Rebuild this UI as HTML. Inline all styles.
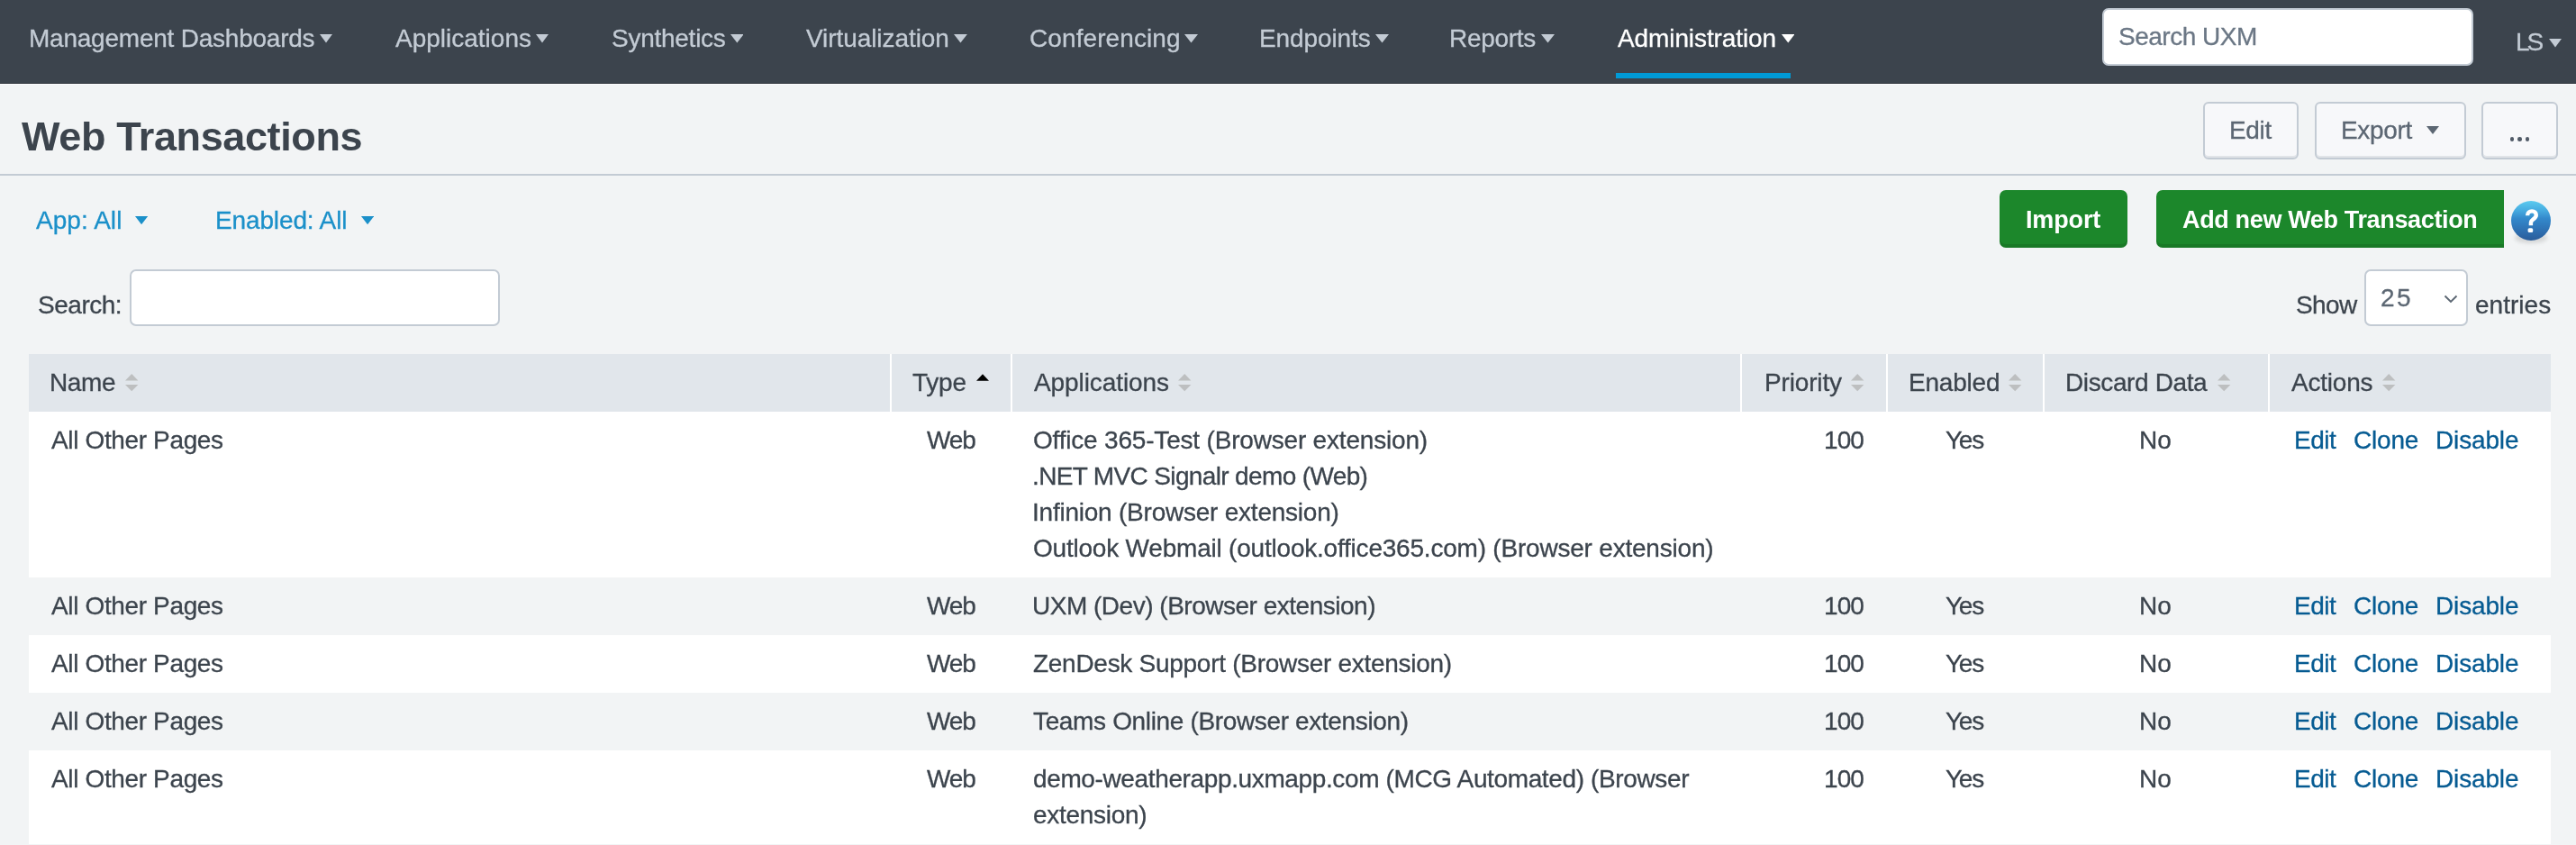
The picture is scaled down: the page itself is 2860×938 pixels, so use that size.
<!DOCTYPE html>
<html>
<head>
<meta charset="utf-8">
<style>
html,body{margin:0;padding:0;}
body{width:2860px;height:938px;overflow:hidden;background:#f2f4f5;font-family:"Liberation Sans",sans-serif;color:#3c444d;position:relative;}
.a{position:absolute;display:block;}
.x{position:absolute;white-space:nowrap;will-change:transform;-webkit-text-stroke:0.3px currentColor;}
#nav{position:absolute;left:0;top:0;width:2860px;height:92px;background:#3c444d;border-bottom:1px solid #30363d;}
#navw{position:absolute;left:0;top:93px;width:2860px;height:1px;background:#fbfbfc;}
#uline{position:absolute;left:1794px;top:81px;width:194px;height:6px;background:#009ad6;}
#gsearch{position:absolute;left:2334px;top:9px;width:408px;height:60px;background:#fff;border:2px solid #c3cbd4;border-radius:7px;}
#hr{position:absolute;left:0;top:193px;width:2860px;height:2px;background:#c3cbd4;}
.btn{position:absolute;top:113px;height:60px;background:#f7f8fa;border:2px solid #c3cbd4;border-radius:6px;box-shadow:inset 0 -2px 0 #e1e4e8;}
.dot{position:absolute;top:152px;width:4.6px;height:4.6px;border-radius:50%;background:#505a66;}
.gbtn{position:absolute;top:211px;height:64px;background:#1c872b;border-radius:7px;box-shadow:inset 0 -4px 0 rgba(0,0,0,0.10);}
#help{position:absolute;left:2788px;top:223px;width:44px;height:44px;border-radius:50%;background:linear-gradient(#5ccbef 0%,#48aee2 22%,#3388cb 45%,#2f74b6 70%,#2a5c9a 100%);}
#helpsh{position:absolute;left:2792px;top:258px;width:36px;height:12px;border-radius:50%;background:rgba(0,0,0,0.12);filter:blur(2px);}
#srch{position:absolute;left:144px;top:299px;width:407px;height:59px;background:#fff;border:2px solid #c3cbd4;border-radius:7px;}
#sel{position:absolute;left:2625px;top:299px;width:111px;height:59px;background:#fff;border:2px solid #c3cbd4;border-radius:7px;}
#thead{position:absolute;left:32px;top:393px;width:2800px;height:64px;background:#e1e6eb;}
.sep{position:absolute;top:393px;width:2px;height:64px;background:#fff;}
.row{position:absolute;left:32px;width:2800px;}

</style>
</head>
<body>
<div id="nav"></div><div id="navw"></div>
<svg class="a" style="left:355.0px;top:38.0px" width="14.0" height="9.5" viewBox="0 0 14.00 9.50"><path d="M0 0 L14.00 0 L7.00 9.50 Z" fill="#c3cbd4"/></svg>
<svg class="a" style="left:595.0px;top:38.0px" width="14.0" height="9.5" viewBox="0 0 14.00 9.50"><path d="M0 0 L14.00 0 L7.00 9.50 Z" fill="#c3cbd4"/></svg>
<svg class="a" style="left:810.6px;top:38.0px" width="14.7" height="9.5" viewBox="0 0 14.70 9.50"><path d="M0 0 L14.70 0 L7.35 9.50 Z" fill="#c3cbd4"/></svg>
<svg class="a" style="left:1059.3px;top:38.0px" width="14.9" height="9.5" viewBox="0 0 14.90 9.50"><path d="M0 0 L14.90 0 L7.45 9.50 Z" fill="#c3cbd4"/></svg>
<svg class="a" style="left:1315.0px;top:38.0px" width="15.0" height="9.5" viewBox="0 0 15.00 9.50"><path d="M0 0 L15.00 0 L7.50 9.50 Z" fill="#c3cbd4"/></svg>
<svg class="a" style="left:1527.0px;top:38.0px" width="15.0" height="9.5" viewBox="0 0 15.00 9.50"><path d="M0 0 L15.00 0 L7.50 9.50 Z" fill="#c3cbd4"/></svg>
<svg class="a" style="left:1711.0px;top:38.0px" width="15.0" height="9.5" viewBox="0 0 15.00 9.50"><path d="M0 0 L15.00 0 L7.50 9.50 Z" fill="#c3cbd4"/></svg>
<svg class="a" style="left:1977.5px;top:38.0px" width="14.5" height="9.5" viewBox="0 0 14.50 9.50"><path d="M0 0 L14.50 0 L7.25 9.50 Z" fill="#ffffff"/></svg>
<div id="uline"></div><div id="gsearch"></div>
<svg class="a" style="left:2830.0px;top:43.0px" width="14.0" height="9.5" viewBox="0 0 14.00 9.50"><path d="M0 0 L14.00 0 L7.00 9.50 Z" fill="#c3cbd4"/></svg>
<div id="hr"></div>
<div class="btn" style="left:2446px;width:102px"></div>
<div class="btn" style="left:2570px;width:164px"></div>
<svg class="a" style="left:2694.0px;top:140.0px" width="14.0" height="9.0" viewBox="0 0 14.00 9.00"><path d="M0 0 L14.00 0 L7.00 9.00 Z" fill="#5c6773"/></svg>
<div class="btn" style="left:2755px;width:81px"></div>
<div class="dot" style="left:2786.8px"></div>
<div class="dot" style="left:2795.2px"></div>
<div class="dot" style="left:2803.6px"></div>
<svg class="a" style="left:150.4px;top:240.0px" width="14.2" height="9.2" viewBox="0 0 14.20 9.20"><path d="M0 0 L14.20 0 L7.10 9.20 Z" fill="#1b90c9"/></svg>
<svg class="a" style="left:400.7px;top:240.0px" width="14.2" height="9.2" viewBox="0 0 14.20 9.20"><path d="M0 0 L14.20 0 L7.10 9.20 Z" fill="#1b90c9"/></svg>
<div class="gbtn" style="left:2220px;width:142px"></div>
<div class="gbtn" style="left:2394px;width:386px;border-radius:7px 0 0 7px"></div>
<div id="helpsh"></div><div id="help"></div>
<svg class="a" style="left:2788px;top:223px" width="44" height="44" viewBox="0 0 44 44"><path d="M18.1 16.2 C18.1 12.9 20.3 11.4 23.1 11.4 C26 11.4 27.8 13.3 27.8 15.7 C27.8 18.3 25.9 19.4 24.1 20.7 C22.6 21.8 21.9 22.8 21.9 24.8 L21.9 27.2" fill="none" stroke="#fff" stroke-width="4.4"/><rect x="18.6" y="30.2" width="5.6" height="4.8" rx="1.6" fill="#fff"/></svg>
<div id="srch"></div>
<div id="sel"></div>
<svg class="a" style="left:2713px;top:327px" width="16" height="10" viewBox="0 0 16 10"><path d="M1.5 1.5 L8 8 L14.5 1.5" fill="none" stroke="#5c6773" stroke-width="1.9"/></svg>
<div id="thead"></div>
<div class="sep" style="left:988px"></div>
<div class="sep" style="left:1122px"></div>
<div class="sep" style="left:1932px"></div>
<div class="sep" style="left:2094px"></div>
<div class="sep" style="left:2268px"></div>
<div class="sep" style="left:2518px"></div>
<svg class="a" style="left:139.0px;top:414.7px" width="15" height="20" viewBox="0 0 15 20"><path d="M7.20 0 L14.40 7.6 L0 7.6 Z" fill="#bdbfc0"/><path d="M0 11.9 L14.40 11.9 L7.20 19.3 Z" fill="#bdbfc0"/></svg>
<svg class="a" style="left:1307.7px;top:414.7px" width="15" height="20" viewBox="0 0 15 20"><path d="M7.20 0 L14.40 7.6 L0 7.6 Z" fill="#bdbfc0"/><path d="M0 11.9 L14.40 11.9 L7.20 19.3 Z" fill="#bdbfc0"/></svg>
<svg class="a" style="left:2055.3px;top:414.7px" width="15" height="20" viewBox="0 0 15 20"><path d="M7.20 0 L14.40 7.6 L0 7.6 Z" fill="#bdbfc0"/><path d="M0 11.9 L14.40 11.9 L7.20 19.3 Z" fill="#bdbfc0"/></svg>
<svg class="a" style="left:2229.5px;top:414.7px" width="15" height="20" viewBox="0 0 15 20"><path d="M7.20 0 L14.40 7.6 L0 7.6 Z" fill="#bdbfc0"/><path d="M0 11.9 L14.40 11.9 L7.20 19.3 Z" fill="#bdbfc0"/></svg>
<svg class="a" style="left:2461.5px;top:414.7px" width="15" height="20" viewBox="0 0 15 20"><path d="M7.20 0 L14.40 7.6 L0 7.6 Z" fill="#bdbfc0"/><path d="M0 11.9 L14.40 11.9 L7.20 19.3 Z" fill="#bdbfc0"/></svg>
<svg class="a" style="left:2644.7px;top:414.7px" width="15" height="20" viewBox="0 0 15 20"><path d="M7.20 0 L14.40 7.6 L0 7.6 Z" fill="#bdbfc0"/><path d="M0 11.9 L14.40 11.9 L7.20 19.3 Z" fill="#bdbfc0"/></svg>
<svg class="a" style="left:1083.7px;top:415px" width="14" height="8" viewBox="0 0 13.6 7.4"><path d="M6.8 0 L13.6 7.4 L0 7.4 Z" fill="#000"/></svg>
<div class="row" style="top:457px;height:184px;background:#fff"></div>
<div class="row" style="top:641px;height:64px;background:#f2f4f5"></div>
<div class="row" style="top:705px;height:64px;background:#fff"></div>
<div class="row" style="top:769px;height:64px;background:#f2f4f5"></div>
<div class="row" style="top:833px;height:104px;background:#fff"></div>
<div class="x" style="left:31.5px;top:23.0px;font-size:28px;line-height:40px;color:#c3cbd4;letter-spacing:-0.23px">Management Dashboards</div>
<div class="x" style="left:439.0px;top:23.0px;font-size:28px;line-height:40px;color:#c3cbd4">Applications</div>
<div class="x" style="left:678.6px;top:23.0px;font-size:28px;line-height:40px;color:#c3cbd4;letter-spacing:-0.26px">Synthetics</div>
<div class="x" style="left:895.4px;top:23.0px;font-size:28px;line-height:40px;color:#c3cbd4;letter-spacing:-0.07px">Virtualization</div>
<div class="x" style="left:1142.6px;top:23.0px;font-size:28px;line-height:40px;color:#c3cbd4;letter-spacing:0.09px">Conferencing</div>
<div class="x" style="left:1397.8px;top:23.0px;font-size:28px;line-height:40px;color:#c3cbd4;letter-spacing:-0.10px">Endpoints</div>
<div class="x" style="left:1609.4px;top:23.0px;font-size:28px;line-height:40px;color:#c3cbd4;letter-spacing:-0.30px">Reports</div>
<div class="x" style="left:1795.8px;top:23.0px;font-size:28px;line-height:40px;color:#ffffff;letter-spacing:-0.10px">Administration</div>
<div class="x" style="left:2351.5px;top:21.3px;font-size:28px;line-height:40px;color:#6b7785;letter-spacing:-0.50px">Search UXM</div>
<div class="x" style="left:2792.8px;top:27.2px;font-size:28px;line-height:40px;color:#c3cbd4;letter-spacing:-3.10px">LS</div>
<div class="x" style="left:24.1px;top:122.4px;font-size:45px;line-height:60px;color:#3c444d;font-weight:700;-webkit-text-stroke:0;letter-spacing:-0.38px">Web Transactions</div>
<div class="x" style="left:2475.0px;top:125.3px;font-size:28px;line-height:40px;color:#5c6773;letter-spacing:-0.33px">Edit</div>
<div class="x" style="left:2598.6px;top:125.3px;font-size:28px;line-height:40px;color:#5c6773;letter-spacing:-0.32px">Export</div>
<div class="x" style="left:39.9px;top:225.1px;font-size:28px;line-height:40px;color:#1b90c9;letter-spacing:0.06px">App: All</div>
<div class="x" style="left:239.4px;top:225.1px;font-size:28px;line-height:40px;color:#1b90c9;letter-spacing:-0.13px">Enabled: All</div>
<div class="x" style="left:2248.7px;top:223.5px;font-size:27px;line-height:40px;color:#ffffff;font-weight:700;-webkit-text-stroke:0;letter-spacing:-0.14px">Import</div>
<div class="x" style="left:2422.7px;top:223.5px;font-size:27px;line-height:40px;color:#ffffff;font-weight:700;-webkit-text-stroke:0;letter-spacing:-0.35px">Add new Web Transaction</div>
<div class="x" style="left:41.6px;top:319.3px;font-size:28px;line-height:40px;color:#3c444d;letter-spacing:-0.48px">Search:</div>
<div class="x" style="left:2549.2px;top:319.3px;font-size:28px;line-height:40px;color:#3c444d;letter-spacing:-0.57px">Show</div>
<div class="x" style="left:2643.0px;top:311.0px;font-size:28px;line-height:40px;color:#5c6773;letter-spacing:2.40px">25</div>
<div class="x" style="left:2747.8px;top:319.3px;font-size:28px;line-height:40px;color:#3c444d;letter-spacing:0.03px">entries</div>
<div class="x" style="left:55.2px;top:405.2px;font-size:28px;line-height:40px;color:#3c444d;letter-spacing:-0.40px">Name</div>
<div class="x" style="left:1013.3px;top:405.2px;font-size:28px;line-height:40px;color:#3c444d;letter-spacing:-0.23px">Type</div>
<div class="x" style="left:1148.0px;top:405.2px;font-size:28px;line-height:40px;color:#3c444d;letter-spacing:-0.09px">Applications</div>
<div class="x" style="left:1959.3px;top:405.2px;font-size:28px;line-height:40px;color:#3c444d;letter-spacing:-0.16px">Priority</div>
<div class="x" style="left:2118.5px;top:405.2px;font-size:28px;line-height:40px;color:#3c444d;letter-spacing:-0.20px">Enabled</div>
<div class="x" style="left:2293.0px;top:405.2px;font-size:28px;line-height:40px;color:#3c444d;letter-spacing:-0.38px">Discard Data</div>
<div class="x" style="left:2544.3px;top:405.2px;font-size:28px;line-height:40px;color:#3c444d;letter-spacing:-0.22px">Actions</div>
<div class="x" style="left:56.5px;top:469.0px;font-size:28px;line-height:40px;color:#3c444d;letter-spacing:-0.36px">All Other Pages</div>
<div class="x" style="left:1028.6px;top:469.0px;font-size:28px;line-height:40px;color:#3c444d;letter-spacing:-1.15px">Web</div>
<div class="x" style="left:1146.8px;top:469.0px;font-size:28px;line-height:40px;color:#3c444d;letter-spacing:-0.19px">Office 365-Test (Browser extension)</div>
<div class="x" style="left:1145.8px;top:509.0px;font-size:28px;line-height:40px;color:#3c444d;letter-spacing:-0.64px">.NET MVC Signalr demo (Web)</div>
<div class="x" style="left:1145.8px;top:549.0px;font-size:28px;line-height:40px;color:#3c444d;letter-spacing:-0.23px">Infinion (Browser extension)</div>
<div class="x" style="left:1146.8px;top:589.0px;font-size:28px;line-height:40px;color:#3c444d;letter-spacing:-0.21px">Outlook Webmail (outlook.office365.com) (Browser extension)</div>
<div class="x" style="left:2025.2px;top:469.0px;font-size:28px;line-height:40px;color:#3c444d;letter-spacing:-0.90px">100</div>
<div class="x" style="left:2159.7px;top:469.0px;font-size:28px;line-height:40px;color:#3c444d;letter-spacing:-1.25px">Yes</div>
<div class="x" style="left:2375.3px;top:469.0px;font-size:28px;line-height:40px;color:#3c444d">No</div>
<div class="x" style="left:2546.9px;top:469.0px;font-size:28px;line-height:40px;color:#065b92;letter-spacing:-0.47px">Edit</div>
<div class="x" style="left:2612.9px;top:469.0px;font-size:28px;line-height:40px;color:#065b92;letter-spacing:-0.20px">Clone</div>
<div class="x" style="left:2704.1px;top:469.0px;font-size:28px;line-height:40px;color:#065b92;letter-spacing:-0.15px">Disable</div>
<div class="x" style="left:56.5px;top:653.0px;font-size:28px;line-height:40px;color:#3c444d;letter-spacing:-0.36px">All Other Pages</div>
<div class="x" style="left:1028.6px;top:653.0px;font-size:28px;line-height:40px;color:#3c444d;letter-spacing:-1.15px">Web</div>
<div class="x" style="left:1145.8px;top:653.0px;font-size:28px;line-height:40px;color:#3c444d;letter-spacing:-0.49px">UXM (Dev) (Browser extension)</div>
<div class="x" style="left:2025.2px;top:653.0px;font-size:28px;line-height:40px;color:#3c444d;letter-spacing:-0.90px">100</div>
<div class="x" style="left:2159.7px;top:653.0px;font-size:28px;line-height:40px;color:#3c444d;letter-spacing:-1.25px">Yes</div>
<div class="x" style="left:2375.3px;top:653.0px;font-size:28px;line-height:40px;color:#3c444d">No</div>
<div class="x" style="left:2546.9px;top:653.0px;font-size:28px;line-height:40px;color:#065b92;letter-spacing:-0.47px">Edit</div>
<div class="x" style="left:2612.9px;top:653.0px;font-size:28px;line-height:40px;color:#065b92;letter-spacing:-0.20px">Clone</div>
<div class="x" style="left:2704.1px;top:653.0px;font-size:28px;line-height:40px;color:#065b92;letter-spacing:-0.15px">Disable</div>
<div class="x" style="left:56.5px;top:717.0px;font-size:28px;line-height:40px;color:#3c444d;letter-spacing:-0.36px">All Other Pages</div>
<div class="x" style="left:1028.6px;top:717.0px;font-size:28px;line-height:40px;color:#3c444d;letter-spacing:-1.15px">Web</div>
<div class="x" style="left:1146.8px;top:717.0px;font-size:28px;line-height:40px;color:#3c444d;letter-spacing:-0.28px">ZenDesk Support (Browser extension)</div>
<div class="x" style="left:2025.2px;top:717.0px;font-size:28px;line-height:40px;color:#3c444d;letter-spacing:-0.90px">100</div>
<div class="x" style="left:2159.7px;top:717.0px;font-size:28px;line-height:40px;color:#3c444d;letter-spacing:-1.25px">Yes</div>
<div class="x" style="left:2375.3px;top:717.0px;font-size:28px;line-height:40px;color:#3c444d">No</div>
<div class="x" style="left:2546.9px;top:717.0px;font-size:28px;line-height:40px;color:#065b92;letter-spacing:-0.47px">Edit</div>
<div class="x" style="left:2612.9px;top:717.0px;font-size:28px;line-height:40px;color:#065b92;letter-spacing:-0.20px">Clone</div>
<div class="x" style="left:2704.1px;top:717.0px;font-size:28px;line-height:40px;color:#065b92;letter-spacing:-0.15px">Disable</div>
<div class="x" style="left:56.5px;top:781.0px;font-size:28px;line-height:40px;color:#3c444d;letter-spacing:-0.36px">All Other Pages</div>
<div class="x" style="left:1028.6px;top:781.0px;font-size:28px;line-height:40px;color:#3c444d;letter-spacing:-1.15px">Web</div>
<div class="x" style="left:1146.8px;top:781.0px;font-size:28px;line-height:40px;color:#3c444d;letter-spacing:-0.35px">Teams Online (Browser extension)</div>
<div class="x" style="left:2025.2px;top:781.0px;font-size:28px;line-height:40px;color:#3c444d;letter-spacing:-0.90px">100</div>
<div class="x" style="left:2159.7px;top:781.0px;font-size:28px;line-height:40px;color:#3c444d;letter-spacing:-1.25px">Yes</div>
<div class="x" style="left:2375.3px;top:781.0px;font-size:28px;line-height:40px;color:#3c444d">No</div>
<div class="x" style="left:2546.9px;top:781.0px;font-size:28px;line-height:40px;color:#065b92;letter-spacing:-0.47px">Edit</div>
<div class="x" style="left:2612.9px;top:781.0px;font-size:28px;line-height:40px;color:#065b92;letter-spacing:-0.20px">Clone</div>
<div class="x" style="left:2704.1px;top:781.0px;font-size:28px;line-height:40px;color:#065b92;letter-spacing:-0.15px">Disable</div>
<div class="x" style="left:56.5px;top:845.0px;font-size:28px;line-height:40px;color:#3c444d;letter-spacing:-0.36px">All Other Pages</div>
<div class="x" style="left:1028.6px;top:845.0px;font-size:28px;line-height:40px;color:#3c444d;letter-spacing:-1.15px">Web</div>
<div class="x" style="left:1146.8px;top:845.0px;font-size:28px;line-height:40px;color:#3c444d;letter-spacing:-0.37px">demo-weatherapp.uxmapp.com (MCG Automated) (Browser</div>
<div class="x" style="left:1146.8px;top:885.0px;font-size:28px;line-height:40px;color:#3c444d;letter-spacing:-0.29px">extension)</div>
<div class="x" style="left:2025.2px;top:845.0px;font-size:28px;line-height:40px;color:#3c444d;letter-spacing:-0.90px">100</div>
<div class="x" style="left:2159.7px;top:845.0px;font-size:28px;line-height:40px;color:#3c444d;letter-spacing:-1.25px">Yes</div>
<div class="x" style="left:2375.3px;top:845.0px;font-size:28px;line-height:40px;color:#3c444d">No</div>
<div class="x" style="left:2546.9px;top:845.0px;font-size:28px;line-height:40px;color:#065b92;letter-spacing:-0.47px">Edit</div>
<div class="x" style="left:2612.9px;top:845.0px;font-size:28px;line-height:40px;color:#065b92;letter-spacing:-0.20px">Clone</div>
<div class="x" style="left:2704.1px;top:845.0px;font-size:28px;line-height:40px;color:#065b92;letter-spacing:-0.15px">Disable</div>
</body>
</html>
